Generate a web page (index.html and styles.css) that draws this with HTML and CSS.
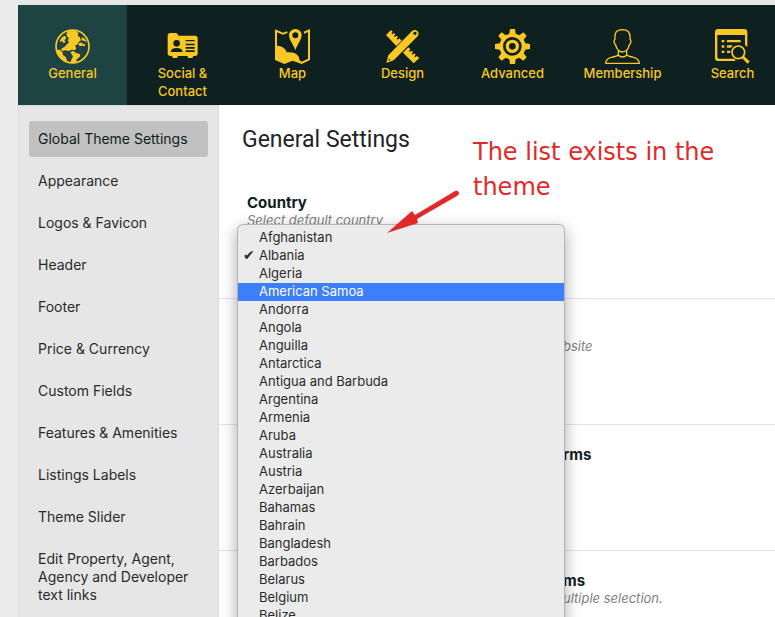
FILE: index.html
```html
<!DOCTYPE html>
<html lang="en">
<head>
<meta charset="utf-8">
<title>General Settings</title>
<link rel="stylesheet" href="styles.css">
</head>
<body>
<div class="page">
  <nav class="tabs" aria-label="Settings groups">
    <a class="tab tab-active" href="#general">
      <svg class="icon" viewBox="0 0 105 105" aria-hidden="true">
        <circle cx="52.500" cy="52.500" r="49.500" fill="none" stroke="currentColor" stroke-width="5"/>
        <path fill="currentColor" d="M40 6 52 3 64 7 70 12 68 20 74 24 78 34 72 38 68 46 60 50 64 58 60 64 50 62 42 66 32 64 22 66 18 60 28 54 36 46 42 40 38 34 42 28 36 22 34 14ZM22 24 30 20 34 28 28 34 32 38 26 42 20 36 14 40 16 32ZM70 44 78 40 86 46 92 44 88 52 80 50 74 52ZM80 24 90 30 96 40 88 36 80 34ZM4 62 14 62 22 68 24 78 32 84 38 98 30 98 16 88 6 74ZM46 70 54 66 64 72 76 76 74 84 66 90 62 102 46 102 50 90 54 82Z"/>
      </svg>
      <span class="tab-label">General</span>
    </a>
    <a class="tab" href="#social">
      <svg class="icon" viewBox="0 0 105 105" aria-hidden="true">
        <path fill="currentColor" fill-rule="evenodd" d="M16 12H32Q36 12 38 16L41 20H90Q98 20 98 28V73Q98 81 90 81H84V84Q84 87 81 87H71Q68 87 68 84V81H38V84Q38 87 35 87H25Q22 87 22 84V81H16Q8 81 8 73V20Q8 12 16 12ZM35 33A10 10 0 1 0 35 53A10 10 0 1 0 35 33ZM17 69H53Q52 57 35 57Q18 57 17 69ZM62 33V37H89V33ZM62 44V49H89V44ZM62 54V59H89V54ZM62 64V69H89V64Z"/>
      </svg>
      <span class="tab-label">Social &amp; Contact</span>
    </a>
    <a class="tab" href="#map">
      <svg class="icon" viewBox="0 0 105 105" aria-hidden="true">
        <path fill="currentColor" d="M0 1 24 11 36 7 38 12 24 17 6 10V50Q28 50 35 70Q56 68 64 75Q73 82 74 94L80 98 99 89V9L88 14 86 8 105 0V93L80 105 53 95 28 105 0 93Z"/>
        <path fill="currentColor" fill-rule="evenodd" d="M61 0A19 19 0 0 1 80 19C80 32 68 44 61 64C54 44 42 32 42 19A19 19 0 0 1 61 0ZM61 10A9 9 0 1 0 61 28A9 9 0 1 0 61 10Z"/>
      </svg>
      <span class="tab-label">Map</span>
    </a>
    <a class="tab" href="#design">
      <svg class="icon" viewBox="0 0 105 105" aria-hidden="true">
        <path fill="currentColor" d="M3 18 18 3 23 8 19 13 22 16 27 12 31 16 27 21 30 24 35 20 39 24 35 29 38 32 43 28 50 35 34 51ZM54 71 70 55 76 61 72 66 75 69 80 65 84 69 80 74 83 77 88 73 92 77 88 82 91 85 96 81 103 87 86 103Z"/>
        <path fill="currentColor" fill-rule="evenodd" d="M81 6Q90 0 97 6Q104 13 98 22L26 94 4 102 10 79ZM90 8A5 5 0 1 0 90 18A5 5 0 1 0 90 8ZM12 89 10 95 17 93Z"/>
      </svg>
      <span class="tab-label">Design</span>
    </a>
    <a class="tab" href="#advanced">
      <svg class="icon" viewBox="0 0 105 105" aria-hidden="true">
        <path fill="currentColor" fill-rule="evenodd" d="M45 0H60L62 14 73 19 85 10 95 20 86 32 91 43 105 45V60L91 62 86 73 95 85 85 95 73 86 62 91 60 105H45L43 91 32 86 20 95 10 85 19 73 14 62 0 60V45L14 43 19 32 10 20 20 10 32 19 43 14ZM52 24A28 28 0 1 0 52 80A28 28 0 1 0 52 24Z"/>
        <circle cx="52" cy="52" r="15" fill="none" stroke="currentColor" stroke-width="10"/>
      </svg>
      <span class="tab-label">Advanced</span>
    </a>
    <a class="tab" href="#membership">
      <svg class="icon" viewBox="0 0 105 105" aria-hidden="true">
        <path fill="none" stroke="currentColor" stroke-width="4" stroke-linejoin="round" d="M52 2C68 2 77 9 75 31Q80 36 76 44L73 48Q70 59 65 64V77Q68 82 86 85Q102 89 103 103H2Q2 89 19 85Q37 82 40 77V64Q34 58 32 48L29 44Q25 36 30 31C28 9 35 3 52 2ZM40 64Q52 74 65 64M39 78Q52 90 66 78"/>
      </svg>
      <span class="tab-label">Membership</span>
    </a>
    <a class="tab" href="#search">
      <svg class="icon" viewBox="0 0 105 105" aria-hidden="true">
        <path fill="currentColor" fill-rule="evenodd" d="M10 0H87Q97 0 97 10V55Q94 50 90 49V18H7V84Q7 89 12 89H58L62 96H10Q0 96 0 86V10Q0 0 10 0ZM20 33H28V40H20ZM36 33H77V40H36ZM20 49H28V56H20ZM36 49H53L48 56H36ZM20 65H28V72H20ZM36 65H45L46 72H36Z"/>
        <circle cx="70" cy="70" r="19" fill="none" stroke="currentColor" stroke-width="5"/>
        <path stroke="currentColor" stroke-width="9" d="M84 84 101 101"/>
      </svg>
      <span class="tab-label">Search</span>
    </a>
  </nav>
  <div class="body">
    <nav class="sidebar" aria-label="General sections">
      <a class="side-link side-active" href="#global">Global Theme Settings</a>
      <a class="side-link" href="#appearance">Appearance</a>
      <a class="side-link" href="#logos">Logos &amp; Favicon</a>
      <a class="side-link" href="#header">Header</a>
      <a class="side-link" href="#footer">Footer</a>
      <a class="side-link" href="#price">Price &amp; Currency</a>
      <a class="side-link" href="#custom">Custom Fields</a>
      <a class="side-link" href="#features">Features &amp; Amenities</a>
      <a class="side-link" href="#labels">Listings Labels</a>
      <a class="side-link" href="#slider">Theme Slider</a>
      <a class="side-link" href="#links">Edit Property, Agent, Agency and Developer text links</a>
    </nav>
    <main class="content">
      <h1 class="title">General Settings</h1>
      <section class="row">
        <label class="name" for="country">Country</label>
        <p class="hint">Select default country</p>
        <select class="menu" id="country" size="23">
          <option>Afghanistan</option>
          <option class="current">Albania</option>
          <option>Algeria</option>
          <option class="highlight">American Samoa</option>
          <option>Andorra</option>
          <option>Angola</option>
          <option>Anguilla</option>
          <option>Antarctica</option>
          <option>Antigua and Barbuda</option>
          <option>Argentina</option>
          <option>Armenia</option>
          <option>Aruba</option>
          <option>Australia</option>
          <option>Austria</option>
          <option>Azerbaijan</option>
          <option>Bahamas</option>
          <option>Bahrain</option>
          <option>Bangladesh</option>
          <option>Barbados</option>
          <option>Belarus</option>
          <option>Belgium</option>
          <option>Belize</option>
        </select>
      </section>
      <section class="row row-tail">
        <div class="name"></div>
        <p class="hint">bsite</p>
      </section>
      <section class="row row-tail">
        <h2 class="name">rms</h2>
      </section>
      <section class="row row-tail">
        <h2 class="name">ms</h2>
        <p class="hint">ultiple selection.</p>
      </section>
      <p class="note">The list exists in the theme</p>
      <svg class="arrow" viewBox="0 0 72 44" aria-hidden="true">
        <path fill="currentColor" d="M0 43 25 21 28 25 68 1Q72 0 72 4L70 6 30 29 31 33Z"/>
      </svg>
    </main>
  </div>
</div>
</body>
</html>
```

FILE: styles.css
```css
* {
  box-sizing: border-box;
}

body {
  margin: 0;
  background: #ececec;
  color: #2b2b2b;
  font-family: Inter, "Liberation Sans", sans-serif;
  font-size: 14px;
  line-height: 18px;
}

a {
  color: inherit;
  text-decoration: none;
}

h1,
h2,
p {
  margin: 0;
}

.page {
  display: flex;
  flex-direction: column;
  height: 100vh;
  margin-left: 18px;
  border-top: 5px solid #e6e6e6;
  overflow: hidden;
}

.tabs {
  display: flex;
  flex: none;
  gap: 1px;
  min-height: 100px;
  overflow: hidden;
  background: #0f2020;
  color: #f9c825;
}

.tab {
  display: flex;
  flex: 0 0 109px;
  flex-direction: column;
  align-items: center;
  padding: 24px 12px 0;
  font-size: 13px;
  font-weight: 500;
  text-align: center;
}

.tab-active {
  background: #1d4342;
}

.icon {
  width: 35px;
  height: 35px;
}

.body {
  display: flex;
  flex: 1;
  min-height: 0;
}

.sidebar {
  display: flex;
  flex: 0 0 201px;
  flex-direction: column;
  gap: 6px;
  padding: 15px 10px;
  border: 1px solid #dcdcdc;
  border-bottom: 0;
  background: #e6e6e6;
}

.side-link {
  padding: 9px;
  border-radius: 3px;
}

.side-active {
  background: #c1c1c1;
  color: #0f2020;
}

.content {
  position: relative;
  flex: 1;
  min-width: 0;
  background: #fff;
}

.title {
  padding: 20px 23px 18px;
  color: #1d2327;
  font-family: Roboto, sans-serif;
  font-size: 23px;
  font-weight: 400;
  line-height: 30px;
}

.row {
  position: relative;
  min-height: 126px;
  padding: 21px 28px;
  border-bottom: 1px solid #fadcdc;
}

.row-tail {
  padding-left: 344px;
}

.name {
  display: block;
  min-height: 18px;
  color: #0f2020;
  font-size: 15px;
  font-weight: 700;
  line-height: 18px;
}

.hint {
  color: #808080;
  font-size: 13px;
  font-style: italic;
  line-height: 16px;
}

.menu {
  position: absolute;
  z-index: 1;
  top: 52px;
  left: 19px;
  width: 326px;
  padding: 4px 0;
  border: 0;
  border-radius: 5px;
  outline: 0;
  overflow: hidden;
  background: #ebebeb;
  box-shadow: 0 0 0 1px #b4b4b4, 0 5px 16px 1px rgba(0, 0, 0, 0.35);
  color: #2b2b2b;
  font-family: inherit;
  font-size: 13px;
}

.menu option {
  position: relative;
  min-height: 18px;
  padding: 0 21px;
  line-height: 18px;
}

.menu .current::before {
  content: "✔";
  position: absolute;
  left: 5px;
  font-family: "DejaVu Sans", sans-serif;
  font-size: 14px;
}

.menu .highlight {
  background: #3d7ffb;
  color: #fff;
}

.note {
  position: absolute;
  z-index: 2;
  top: 30px;
  left: 254px;
  width: 270px;
  color: #e22929;
  font-family: "DejaVu Sans", sans-serif;
  font-size: 24px;
  line-height: 35px;
}

.arrow {
  position: absolute;
  z-index: 2;
  top: 85px;
  left: 168px;
  width: 72px;
  height: 44px;
  color: #e22929;
}
```
